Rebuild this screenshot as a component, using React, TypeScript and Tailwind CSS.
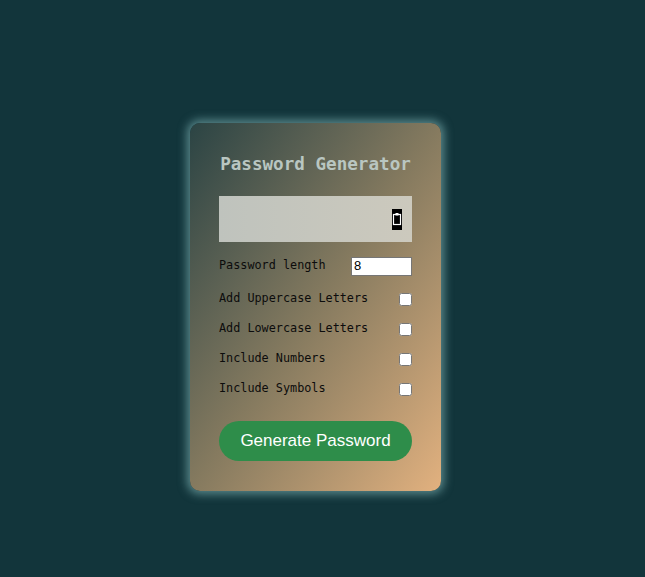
import React from "react";

const mono = { fontFamily: '"DejaVu Sans Mono", monospace' };

const options = [
  "Add Uppercase Letters",
  "Add Lowercase Letters",
  "Include Numbers",
  "Include Symbols",
];

function ClipboardIcon() {
  return (
    <svg width="10" height="21" viewBox="0 0 10 21" className="block">
      <rect x="0" y="0" width="10" height="21" fill="#000" />
      <rect x="1.5" y="5.5" width="7" height="10" fill="none" stroke="#fff" strokeWidth="1.2" />
      <rect x="3.5" y="4" width="3" height="2.5" fill="#fff" />
    </svg>
  );
}

export default function App() {
  return (
    <main className="min-h-[577px] w-full bg-[#12353b] flex items-start justify-center pt-[123px]">
      <section className="w-[251px] rounded-[10px] bg-gradient-to-br from-[#2b4444] via-[#857a5f] to-[#e2b17f] px-[29px] pt-[30px] pb-[30px] shadow-[0_0_10px_3px_rgba(150,205,205,0.55)] ml-[-14px]">
        <h1 className="text-[17.6px] font-bold text-[#b9c6c1] leading-[22px] text-center whitespace-nowrap" style={mono}>
          Password Generator
        </h1>
        <div className="mt-[21px] h-[46px] bg-gradient-to-r from-[#bfc3bd] to-[#ccc9bd] flex items-center justify-end pr-[10px]">
          <ClipboardIcon />
        </div>
        <div className="mt-[15px] flex flex-col gap-[12px] text-[11.8px] text-[#0c0c0c]" style={mono}>
          <div className="flex items-center justify-between h-[18px] mb-[3px]">
            <span>Password length</span>
            <input
              type="number"
              defaultValue={8}
              className="w-[61px] h-[19px] bg-white border border-[#767676] text-[13px] text-black px-[2px] appearance-none"
              style={{ fontFamily: '"Liberation Sans", Arial, sans-serif' }}
            />
          </div>
          {options.map((o) => (
            <label key={o} className="flex items-center justify-between h-[18px]">
              <span>{o}</span>
              <input type="checkbox" className="w-[13px] h-[13px] accent-white" />
            </label>
          ))}
        </div>
        <button
          className="mt-[23px] w-full h-[40px] rounded-full bg-[#2e8d4a] text-white text-[17px]"
          style={{ fontFamily: '"Liberation Sans", Arial, sans-serif' }}
        >
          Generate Password
        </button>
      </section>
    </main>
  );
}
